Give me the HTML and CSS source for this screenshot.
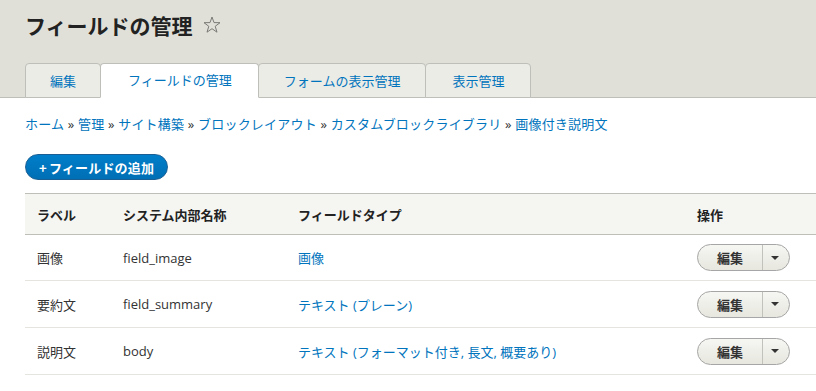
FILE: index.html
```html
<!DOCTYPE html>
<html lang="ja">
<head>
<meta charset="utf-8">
<title>フィールドの管理</title>
<link rel="stylesheet" href="styles.css">
</head>
<body>
<header class="page-header">
  <div class="title-row">
    <h1 class="page-title">フィールドの管理</h1>
    <svg class="star" width="18" height="18" viewBox="0 0 18 18" aria-hidden="true">
      <path d="M9 1 L11 6.6 L17 6.7 L12.2 10.3 L14 16.2 L9 12.7 L4 16.2 L5.8 10.3 L1 6.7 L7 6.6 Z" fill="none" stroke="#7a7a76" stroke-width="1" stroke-linejoin="round"/>
    </svg>
  </div>
  <ul class="tabs">
    <li class="tab"><a href="#">編集</a></li>
    <li class="tab is-active"><a href="#">フィールドの管理</a></li>
    <li class="tab"><a href="#">フォームの表示管理</a></li>
    <li class="tab"><a href="#">表示管理</a></li>
  </ul>
</header>
<main class="content">
  <nav class="breadcrumb">
    <a href="#">ホーム</a> » <a href="#">管理</a> » <a href="#">サイト構築</a> » <a href="#">ブロックレイアウト</a> » <a href="#">カスタムブロックライブラリ</a> » <a href="#">画像付き説明文</a>
  </nav>
  <div class="actions">
    <a class="button-primary" href="#"><span class="plus">+</span>フィールドの追加</a>
  </div>
  <table class="field-table">
    <thead>
      <tr>
        <th class="col-label">ラベル</th>
        <th class="col-machine">システム内部名称</th>
        <th class="col-type">フィールドタイプ</th>
        <th class="col-ops">操作</th>
      </tr>
    </thead>
    <tbody>
      <tr>
        <td>画像</td>
        <td>field_image</td>
        <td><a href="#">画像</a></td>
        <td><div class="dropbutton"><a class="db-main" href="#">編集</a><span class="db-toggle"><span class="caret"></span></span></div></td>
      </tr>
      <tr>
        <td>要約文</td>
        <td>field_summary</td>
        <td><a href="#">テキスト (プレーン)</a></td>
        <td><div class="dropbutton"><a class="db-main" href="#">編集</a><span class="db-toggle"><span class="caret"></span></span></div></td>
      </tr>
      <tr>
        <td>説明文</td>
        <td>body</td>
        <td><a href="#">テキスト (フォーマット付き, 長文, 概要あり)</a></td>
        <td><div class="dropbutton"><a class="db-main" href="#">編集</a><span class="db-toggle"><span class="caret"></span></span></div></td>
      </tr>
    </tbody>
  </table>
</main>
</body>
</html>
```

FILE: styles.css
```css
* { box-sizing: border-box; }

html, body {
  margin: 0;
  padding: 0;
  background: #ffffff;
  color: #333333;
  font-family: "Open Sans", "Noto Sans CJK JP", sans-serif;
  font-size: 13px;
}

a { color: #0074bd; text-decoration: none; }

.page-header {
  background: #e0e0d8;
  border-bottom: 1px solid #bfbfba;
  padding: 0 0 0 25px;
}

.title-row {
  display: flex;
  align-items: center;
  gap: 10px;
  padding-top: 11px;
  height: 39px;
}

.page-title {
  margin: 0;
  font-family: "Noto Sans CJK JP", sans-serif;
  font-size: 21px;
  font-weight: 700;
  line-height: 28px;
  color: #222222;
}

.star { display: block; margin-top: 0; }

.tabs {
  list-style: none;
  margin: 24px 0 -1px 0;
  padding: 0;
  display: flex;
}

.tab {
  height: 35px;
  background: #ecece6;
  border: 1px solid #bfbfba;
  border-radius: 4px 4px 0 0;
  margin-left: -1px;
  display: flex;
  align-items: center;
}

.tab:first-child { margin-left: 0; }

.tab a {
  display: block;
  padding: 0 24px;
  line-height: 20px;
  font-family: "Noto Sans CJK JP", sans-serif;
  font-size: 13px;
  color: #0074bd;
}

.tab:nth-child(3) a { padding: 0 25px; }
.tab:last-child a { padding: 0 26px; }

.tab.is-active {
  background: #ffffff;
  border-bottom-color: #ffffff;
  position: relative;
  z-index: 1;
  padding-bottom: 1px;
}

.tab.is-active a { padding: 0 26px 0 27px; }

.content {
  padding: 16px 0 0 25px;
}

.breadcrumb {
  line-height: 20px;
  color: #333333;
  font-size: 13px;
  letter-spacing: 0.2px;
}

.actions {
  margin-top: 20px;
  display: flex;
}

.button-primary {
  display: inline-flex;
  align-items: center;
  height: 26px;
  padding: 0 13px 0 13px;
  border-radius: 14px;
  background: linear-gradient(#007ec9, #006fb5);
  border: 1px solid #1a5f94;
  color: #ffffff;
  font-family: "Noto Sans CJK JP", sans-serif;
  font-weight: 700;
  font-size: 13px;
  letter-spacing: 0.2px;
}

.plus { margin-right: 2px; }

.field-table {
  margin-top: 13px;
  width: 100%;
  border-collapse: collapse;
}

.field-table th {
  background: #f5f5f2;
  border-top: 1px solid #bfbfba;
  border-bottom: 1px solid #bfbfba;
  height: 41px;
  padding: 0 12px;
  text-align: left;
  font-weight: 700;
  color: #222222;
  font-family: "Noto Sans CJK JP", sans-serif;
}

.col-label { width: 86px; }
.col-machine { width: 175px; }
.col-type { width: 399px; }

.field-table td {
  height: 47px;
  padding: 0 12px;
  border-bottom: 1px solid #e6e4df;
  vertical-align: middle;
}

.field-table tbody tr:first-child td { height: 46px; }

.dropbutton {
  display: inline-flex;
  height: 27px;
  border: 1px solid #a6a6a6;
  border-radius: 14px;
  background: linear-gradient(#f6f6f3, #e7e7df);
  overflow: hidden;
}

.db-main {
  width: 65px;
  display: flex;
  align-items: center;
  justify-content: center;
  color: #333333;
  font-family: "Noto Sans CJK JP", sans-serif;
  font-weight: 700;
  font-size: 13px;
  border-right: 1px solid #c2c2bd;
}

.db-toggle {
  width: 26px;
  display: flex;
  align-items: center;
  justify-content: center;
}

.caret {
  width: 0;
  height: 0;
  border-left: 4px solid transparent;
  border-right: 4px solid transparent;
  border-top: 4px solid #333333;
  margin-left: -2px;
}
```
